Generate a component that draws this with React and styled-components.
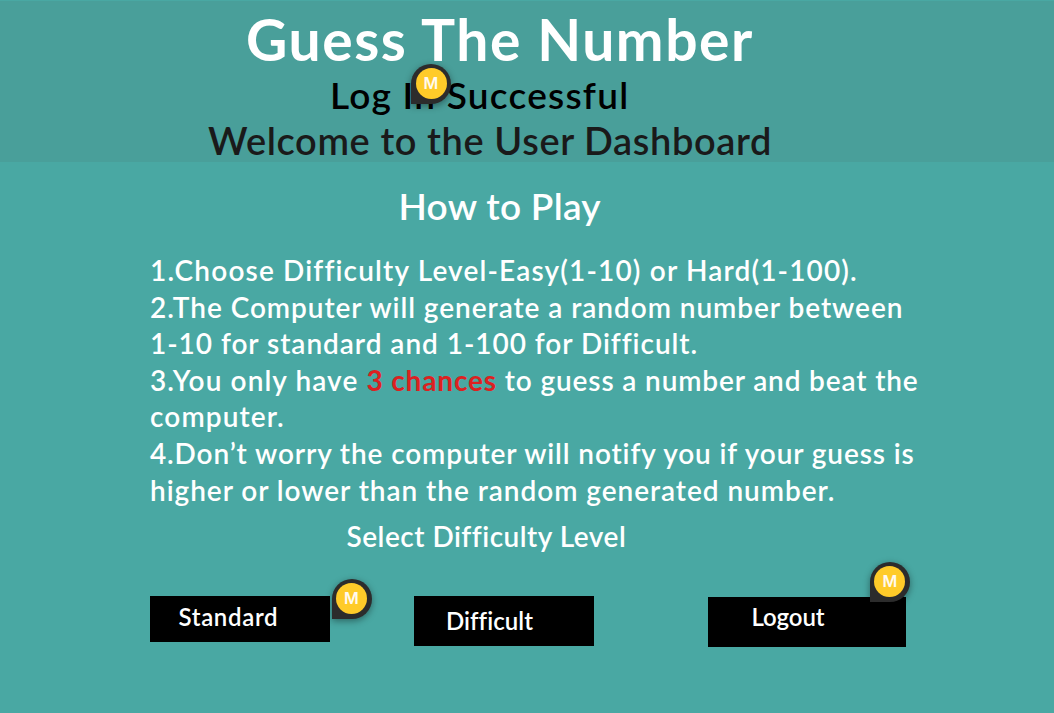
import React from "react";
import styled, { createGlobalStyle } from "styled-components";

const GlobalStyle = createGlobalStyle`
  html, body { margin: 0; padding: 0; background: #49a8a3; }
  * { box-sizing: border-box; }
`;

const Page = styled.main`
  position: relative;
  display: flex;
  flex-direction: column;
  width: 1054px;
  height: 713px;
  padding-top: 1px;
  overflow: hidden;
  background: #49a8a3;
  color: #ffffff;
  font-family: Lato, "Open Sans", sans-serif;
  font-weight: 600;
`;

const Header = styled.header`
  display: flex;
  flex-direction: column;
  flex: none;
  height: 161px;
  padding-top: 3px;
  background: #499f9a;
`;

const Heading = styled.div`
  flex: none;
  margin: 0;
  margin-top: ${(p) => p.$top || 0}px;
  padding-left: ${(p) => p.$indent}px;
  font-size: ${(p) => p.$size}px;
  line-height: ${(p) => p.$height}px;
  letter-spacing: ${(p) => p.$track}px;
  color: ${(p) => p.$color || "#ffffff"};
  font-weight: ${(p) => p.$weight || 600};
  white-space: nowrap;
`;

const Rules = styled.div`
  flex: none;
  margin-top: 24px;
  padding-left: 150px;
  font-size: 28px;
  line-height: 36.6px;
`;

const RuleLine = styled.div`
  white-space: pre;
  letter-spacing: ${(p) => p.$track}px;
`;

const Part = styled.span`
  letter-spacing: ${(p) => p.$track}px;
`;

const Chances = styled(Part)`
  color: #dc2121;
  font-weight: 700;
`;

const Actions = styled.nav`
  display: flex;
  align-items: flex-start;
  flex: none;
  margin-top: 41.8px;
  padding-left: 150px;
`;

const ActionButton = styled.button`
  position: relative;
  display: flex;
  align-items: center;
  width: ${(p) => p.$width}px;
  height: ${(p) => p.$height}px;
  margin: ${(p) => p.$top || 0}px 0 0 ${(p) => p.$gap || 0}px;
  padding: 0 0 ${(p) => p.$lift || 0}px ${(p) => p.$indent}px;
  border: 0;
  background: #000000;
  color: #ffffff;
  font: inherit;
  font-size: 24px;
  line-height: 30px;
  letter-spacing: ${(p) => p.$track}px;
  white-space: nowrap;
`;

const CommentPin = styled.span`
  position: absolute;
  left: ${(p) => p.$x}px;
  top: ${(p) => p.$y}px;
  display: flex;
  align-items: center;
  justify-content: center;
  width: 40px;
  height: 40px;
  border-radius: 20px 20px 20px 0;
  background: #2c2c2c;
  box-shadow: 0 2px 7px rgba(0, 0, 0, 0.4);
`;

const Avatar = styled.span`
  display: flex;
  align-items: center;
  justify-content: center;
  width: 31px;
  height: 31px;
  border-radius: 50%;
  background: #ffcb29;
  color: #fffaf0;
  font: 600 16px/31px Inter, sans-serif;
  letter-spacing: 0;
`;

function Pin({ x, y }) {
  return (
    <CommentPin $x={x} $y={y}>
      <Avatar>M</Avatar>
    </CommentPin>
  );
}

export default function App() {
  return (
    <>
      <GlobalStyle />
      <Page>
        <Header>
          <Heading as="h1" $indent={246} $size={57} $height={70} $track={1.54} $weight={700}>Guess The Number</Heading>
          <Heading as="h2" $indent={330} $size={37} $height={42} $track={1.25} $color="#000000">Log In Successful</Heading>
          <Heading as="h2" $top={1} $indent={208} $size={38} $height={46} $track={0.6} $color="#1a1a1a">Welcome to the User Dashboard</Heading>
        </Header>
        <Heading as="h2" $top={22} $indent={398.5} $size={37} $height={44} $track={0.3}>How to Play</Heading>
        <Rules>
          <RuleLine $track={1.16}>1.Choose Difficulty Level-Easy(1-10) or Hard(1-100).</RuleLine>
          <RuleLine $track={0.95}>2.The Computer will generate a random number between</RuleLine>
          <RuleLine $track={0.96}>1-10 for standard and 1-100 for Difficult.</RuleLine>
          <RuleLine>
            <Part $track={1.1}>3.You only have </Part>
            <Chances $track={0.85}>3 chances</Chances>
            <Part $track={0.86}> to guess a number and beat the</Part>
          </RuleLine>
          <RuleLine $track={1.1}>computer.</RuleLine>
          <RuleLine $track={0.88}>4.Don’t worry the computer will notify you if your guess is</RuleLine>
          <RuleLine $track={0.95}>higher or lower than the random generated number.</RuleLine>
        </Rules>
        <Heading as="h3" $top={10} $indent={346.5} $size={28} $height={36} $track={0.5}>Select Difficulty Level</Heading>
        <Actions>
          <ActionButton $width={180.4} $height={46} $indent={28.5} $lift={3} $track={0.66}>
            Standard
            <Pin x={181.5} y={-17} />
          </ActionButton>
          <ActionButton $width={180.4} $height={50} $gap={83.5} $indent={32} $track={0.08}>
            Difficult
          </ActionButton>
          <ActionButton $width={198.4} $height={50} $gap={113.6} $top={1} $indent={43.6} $lift={10} $track={-0.1}>
            Logout
            <Pin x={162} y={-35} />
          </ActionButton>
        </Actions>
        <Pin x={411} y={63.5} />
      </Page>
    </>
  );
}
